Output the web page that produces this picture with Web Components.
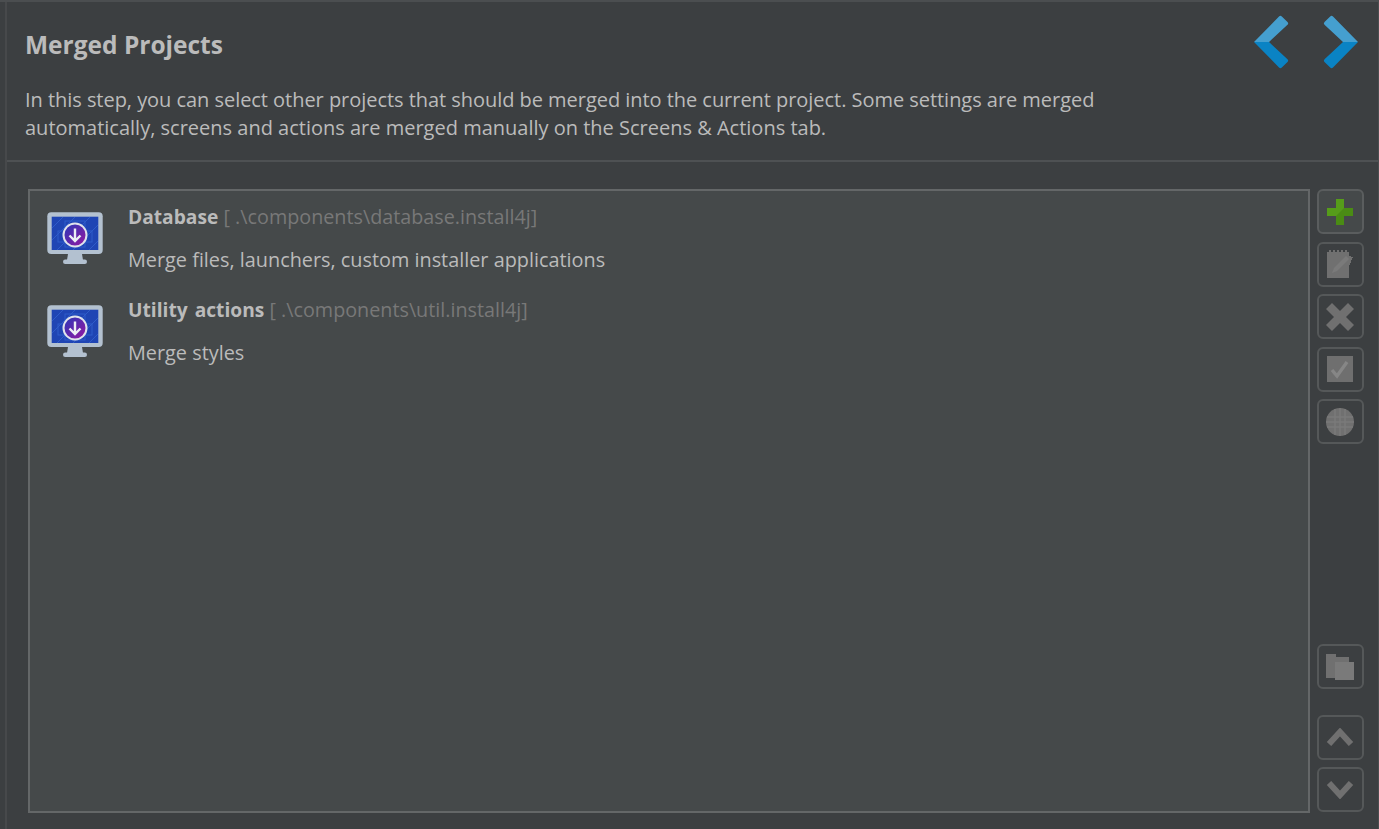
<!DOCTYPE html>
<html><head><meta charset="utf-8">
<style>
html,body{margin:0;padding:0;width:1379px;height:829px;overflow:hidden;background:#3c3f41;font-family:"Open Sans","Noto Sans",sans-serif}
</style></head><body>
<template id="t-page">
<style>
:host{display:flex;flex-direction:column;width:1379px;height:829px;box-sizing:border-box;background:#3c3f41;border-top:2px solid #4b4e50;border-right:1px solid #4b4e50}
.wrap{flex:1;min-height:0;display:flex;flex-direction:column;margin-left:5px;border-left:2px solid #47494b}
</style>
<div class="wrap"><slot></slot></div>
</template>
<template id="t-head">
<style>
:host{display:flex;flex-direction:column;height:160px;box-sizing:border-box;border-bottom:2px solid #4e5153;padding:0 20px 0 18px;color:#bbb}
.top{display:flex;justify-content:space-between;align-items:flex-start;height:84px}
h1{margin:0;padding-top:26px;font:700 24.5px/34px "Open Sans",sans-serif;color:#bbb}
.nav{display:flex;gap:32px;padding-top:13px}
p{margin:0;font:400 20px/28px "Open Sans",sans-serif;color:#bbb;width:1100px}
p::first-line{letter-spacing:-.042px}
</style>
<div class="top"><h1><slot name="title"></slot></h1><div class="nav"><slot name="nav"></slot></div></div>
<p><slot></slot></p>
</template>
<template id="t-arrow">
<style>:host{display:block;width:36px;height:54px}svg{display:block}</style>
<svg width="36" height="54" viewBox="0 0 36 54"></svg>
</template>
<template id="t-body">
<style>
:host{flex:1;min-height:0;display:flex;gap:7px;padding:27px 14px 16px 21px}
.list{flex:1;min-width:0;box-sizing:border-box;background:#45494a;border:2px solid #646768;padding:5px 0 0 0}
.tools{width:47px;flex:none;display:flex;flex-direction:column}
</style>
<div class="list"><slot name="list"></slot></div>
<div class="tools"><slot name="tools"></slot></div>
</template>
<template id="t-item">
<style>
:host{display:flex;height:92.5px;box-sizing:border-box;padding:0 0 0 16px;color:#bbb;font:400 20px/28px "Open Sans",sans-serif}
.ic{width:60px;flex:none;margin-right:22px;padding-top:16px}
.ic svg{display:block;filter:blur(.35px)}
.tx{padding-top:7px}
.t{white-space:nowrap;height:28px}
b{font-weight:700;color:#bbb;font-size:19.2px;word-spacing:2px}
.path{color:#787878;font-size:19.75px}
.s{margin-top:15px;white-space:nowrap;font-size:19.85px}
</style>
<div class="ic"><svg width="58" height="54" viewBox="0 0 58 54">
<rect x="1.3" y=".3" width="55.4" height="41.7" rx="4" fill="#b3c1d0"/>
<rect x="5.7" y="4.7" width="46.6" height="33.3" fill="#1f45b4"/>
<g stroke="#2f5cc9" stroke-width="1" fill="none"><path d="M6 16l11-11M6 28l23-23M11 38l33-33M27 38l25-25M43 38l9-9"/><rect x="12" y="19" width="34" height="11"/><rect x="19" y="9" width="20" height="26"/></g>
<path d="M22 42h14l1 6H21z" fill="#b3c1d0"/>
<rect x="17" y="47.5" width="24" height="4.5" rx="2.2" fill="#b3c1d0"/>
<defs><linearGradient id="g" x1="0" y1="0" x2="1" y2="1"><stop offset="0" stop-color="#2639b8"/><stop offset="1" stop-color="#9a17a0"/></linearGradient></defs>
<circle cx="29" cy="23" r="11.5" fill="url(#g)" stroke="#dfe3ec" stroke-width="2"/>
<path d="M29 16.5v12.5M23.5 23.5l5.5 5.5 5.5-5.5" fill="none" stroke="#eceff5" stroke-width="2.4"/>
</svg></div>
<div class="tx"><div class="t"><b><slot name="name"></slot></b> <span class="path"><slot name="path"></slot></span></div>
<div class="s"><slot name="sub"></slot></div></div>
</template>
<template id="t-btn">
<style>
:host{display:flex;align-items:center;justify-content:center;box-sizing:border-box;width:46.5px;height:45px;border:2px solid #555859;border-radius:6px;margin-bottom:7.5px;flex:none}
:host([primary]){background:#45494a;border-color:#5a5d5e}
:host([push]){margin-top:auto}
:host([gap]){margin-bottom:25.5px}
:host([last]){margin-bottom:1px}
::slotted(svg){display:block;filter:blur(.45px)}
</style>
<slot></slot>
</template>
<merged-page>
<merged-head>
<span slot="title">Merged Projects</span>
<nav-arrow slot="nav" dir="left"></nav-arrow>
<nav-arrow slot="nav" dir="right"></nav-arrow>
In this step, you can select other projects that should be merged into the current project. Some settings are merged automatically, screens and actions are merged manually on the Screens &amp; Actions tab.
</merged-head>
<merged-body>
<merged-item slot="list"><span slot="name">Database</span><span slot="path">[ .\components\database.install4j]</span><span slot="sub">Merge files, launchers, custom installer applications</span></merged-item>
<merged-item slot="list"><span slot="name">Utility actions</span><span slot="path">[ .\components\util.install4j]</span><span slot="sub">Merge styles</span></merged-item>
<tool-btn slot="tools" primary><svg width="26" height="26" viewBox="0 0 26 26"><path d="M9 0h8v9h9v8h-9v9H9v-9H0V9h9z" fill="#569c1a"/><path d="M17 9h9v8h-9v9H9v-9z" fill="#4a8c14"/></svg></tool-btn>
<tool-btn slot="tools"><svg width="29" height="28" viewBox="0 0 29 28" shape-rendering="crispEdges"><path d="M1 2h2V0h2v2h2V0h2v2h2V0h2v2h2V0h2v2h2V0h2v2h2v4l4 1-4 9v12H1z" fill="#707070"/><path d="M6 23l2-5L20 6l3 3L11 21z" fill="#7a7a7a" shape-rendering="auto"/></svg></tool-btn>
<tool-btn slot="tools"><svg width="28" height="28" viewBox="0 0 28 28"><path d="M6 0l8 8 8-8 6 6-8 8 8 8-6 6-8-8-8 8-6-6 8-8-8-8z" fill="#707070"/></svg></tool-btn>
<tool-btn slot="tools"><svg width="26" height="26" viewBox="0 0 26 26"><rect width="26" height="26" fill="#6f6f6f"/><path d="M5 14l5 6L20 6" fill="none" stroke="#868686" stroke-width="3.4"/></svg></tool-btn>
<tool-btn slot="tools"><svg width="28" height="28" viewBox="0 0 28 28"><circle cx="14" cy="14" r="14" fill="#707070"/><path d="M1 9h26M0 14h28M1 19h26M9 1v26M14 0v28M19 1v26" stroke="#7a7a7a" stroke-width="1.5"/></svg></tool-btn>
<tool-btn slot="tools" push gap><svg width="28" height="26" viewBox="0 0 28 26"><path d="M0 0h10v3h13v6H9v15H0z" fill="#707070"/><path d="M9 8h19v18H9z" fill="#7a7a7a"/></svg></tool-btn>
<tool-btn slot="tools"><svg width="28" height="18" viewBox="0 0 28 18"><path d="M3 16L14 4l11 12" fill="none" stroke="#707070" stroke-width="6"/></svg></tool-btn>
<tool-btn slot="tools" last><svg width="28" height="18" viewBox="0 0 28 18"><path d="M3 2l11 12L25 2" fill="none" stroke="#707070" stroke-width="6"/></svg></tool-btn>
</merged-body>
</merged-page>
<script>
function def(name,tid,extra){
  customElements.define(name,class extends HTMLElement{
    constructor(){super();this.attachShadow({mode:'open'}).appendChild(document.getElementById(tid).content.cloneNode(true));}
    connectedCallback(){if(extra)extra(this);}
  });
}
def('merged-page','t-page');
def('merged-head','t-head');
def('merged-body','t-body');
def('merged-item','t-item');
def('tool-btn','t-btn');
def('nav-arrow','t-arrow',function(el){
  var s=el.shadowRoot.querySelector('svg');
  var l=el.getAttribute('dir')==='left';
  var top='<path d="M25 1.5a2 2 0 0 1 2.8 0L33.5 7a2 2 0 0 1 0 2.8L15 27H0z" fill="#459fcf"/>';
  var bot='<path d="M0 27h15l18.5 17.2a2 2 0 0 1 0 2.8L27.8 52.5a2 2 0 0 1-2.8 0z" fill="#0a83c4"/>';
  s.innerHTML=l?top+bot:'<g transform="translate(36 0) scale(-1 1)">'+top+bot+'</g>';
});
</script>
</body></html>
